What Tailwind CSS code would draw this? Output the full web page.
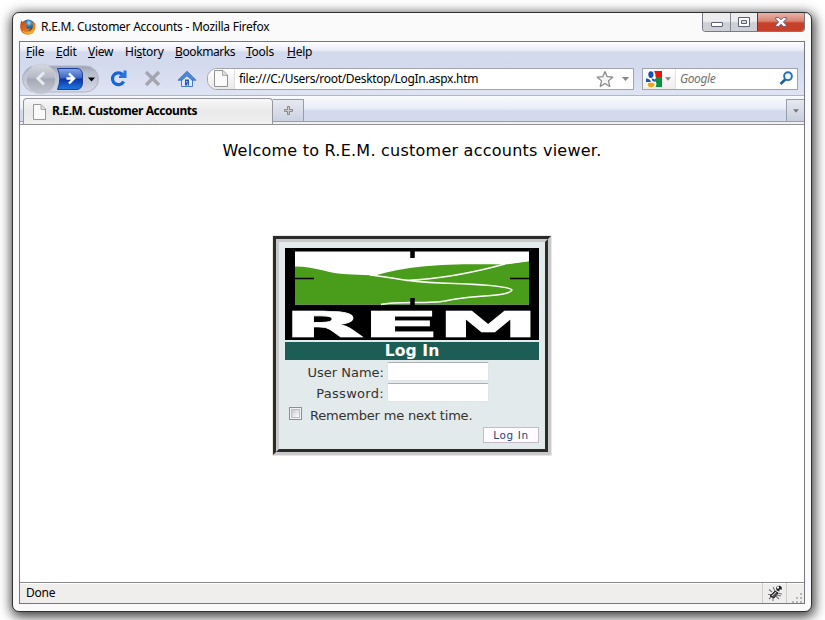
<!DOCTYPE html>
<html lang="en">
<head>
<meta charset="utf-8">
<title>R.E.M. Customer Accounts</title>
<script src="https://cdn.jsdelivr.net/npm/@tailwindcss/browser@4"></script>
</head>
<body class="h-[620px] w-[825px] overflow-hidden bg-white pl-[12px] pt-[12px] font-['Noto_Sans',sans-serif] text-[12px] text-black">
<div class="flex h-[600px] w-[800px] flex-col rounded-[7px] border border-[#303030] bg-[#fafafa] px-[6px] pb-[7px] shadow-[1px_3px_12px_2px_rgba(0,0,0,0.75)]">
  <header class="flex h-[28px] shrink-0 justify-between">
    <div class="flex items-center gap-[5px] pl-[1px]">
      <svg class="size-[16px]" viewBox="0 0 16 16">
        <defs><radialGradient id="globe" cx=".55" cy=".25"><stop offset="0" stop-color="#9cdcf2"/><stop offset=".5" stop-color="#2b78b8"/><stop offset="1" stop-color="#163a78"/></radialGradient><linearGradient id="fox" x2="1" y2="1"><stop offset="0" stop-color="#b4471c"/><stop offset=".55" stop-color="#e8741b"/><stop offset="1" stop-color="#f4b32a"/></linearGradient></defs>
        <circle cx="8.2" cy="7.4" r="6.8" fill="url(#globe)"/>
        <path d="M1.3 1.6 2.8 3 5 2.4 6.2 4.2 8 5 6.8 6.3 6 7.4 7 9.4 9.3 9.7 11 8.7 9.8 10.8 8 11.6C11 12 13 9.5 12.8 6.4L12 3.3C14.5 4.5 15 2.4 15.5 6.3 16 11.8 12.4 15.7 8 15.7 3 15.7.3 12.2.2 8 .2 5 .8 3.3 1.3 1.6Z" fill="url(#fox)"/>
        <path d="M3 12C6 15 11 14.5 13.7 11" fill="none" stroke="#f8c53a" stroke-width="1"/>
      </svg>
      <span class="whitespace-nowrap tracking-[-0.25px]">R.E.M. Customer Accounts - Mozilla Firefox</span>
    </div>
    <div class="flex h-[19px] overflow-hidden rounded-b-[4px] border border-t-0 border-[#777983]">
      <button class="flex w-[28px] items-center justify-center border-r border-[#858791] bg-linear-to-b from-[#ededf0] from-45% to-[#cfd0d5] to-55%"><svg class="mt-[4px] h-[5px] w-[12px]" viewBox="0 0 12 5"><rect x=".5" y=".5" width="11" height="4" rx=".5" fill="#fff" stroke="#596078"/></svg></button>
      <button class="flex w-[26px] items-center justify-center bg-linear-to-b from-[#ededf0] from-45% to-[#cfd0d5] to-55%"><svg class="h-[10px] w-[12px]" viewBox="0 0 12 10"><path fill-rule="evenodd" d="M.5.5h11v9H.5Zm3 3v3h5v-3Z" fill="#fff" stroke="#596078"/></svg></button>
      <button class="flex w-[47px] items-center justify-center border-l border-[#7b2c22] bg-linear-to-b from-[#e9b3a8] from-0% via-[#d98371] via-45% to-[#c9402a] to-55%"><svg class="h-[10px] w-[12px]" viewBox="0 0 12 10"><path d="M.7.6h3.1L6 2.8 8.2.6h3.1V2L8.4 5l2.9 3v1.4H8.2L6 7.2 3.8 9.4H.7V8l2.9-3L.7 2Z" fill="#fff" stroke="#5c5068" stroke-width=".9"/></svg></button>
    </div>
  </header>

  <section class="flex min-h-0 flex-1 flex-col border border-[#74777d] bg-white">
    <nav class="flex h-[20px] shrink-0 items-center bg-linear-to-b from-white from-0% via-[#e9edf7] via-40% to-[#d3daed] to-50% pl-[6px] tracking-[-0.25px]">
      <span class="w-[30px]"><u>F</u>ile</span><span class="w-[32px]"><u>E</u>dit</span><span class="w-[37px]"><u>V</u>iew</span><span class="w-[50px]">Hi<u>s</u>tory</span><span class="w-[71px] tracking-[-0.4px]"><u>B</u>ookmarks</span><span class="w-[41px]"><u>T</u>ools</span><span><u>H</u>elp</span>
    </nav>
    <div class="flex h-[34px] shrink-0 items-center border-b border-[#b1b6c6] bg-linear-to-b from-[#d2d9ed] to-[#dfe4f3] pl-[2px] pr-[5px]">
      <svg class="h-[32px] w-[78px] shrink-0" viewBox="0 0 78 32">
        <defs><linearGradient id="pill" x2="0" y2="1"><stop offset="0" stop-color="#9ca2b2"/><stop offset=".25" stop-color="#b7bccb"/><stop offset="1" stop-color="#d6dbe9"/></linearGradient><linearGradient id="round" x2="0" y2="1"><stop offset="0" stop-color="#d5d9e2"/><stop offset=".45" stop-color="#b4b9c5"/><stop offset=".5" stop-color="#a4a9b5"/><stop offset="1" stop-color="#c3c8d3"/></linearGradient><linearGradient id="fwd" x2="0" y2="1"><stop offset="0" stop-color="#87a7e4"/><stop offset=".45" stop-color="#3a65c4"/><stop offset=".5" stop-color="#0b32a2"/><stop offset="1" stop-color="#2179e4"/></linearGradient></defs>
        <rect x=".5" y="3" width="76" height="26" rx="13" fill="url(#pill)" stroke="#b0b5c3"/>
        <circle cx="19" cy="16" r="15" fill="url(#round)" stroke="#c9cdd7"/>
        <path d="M22 9.500 16 15.500l6 6" fill="none" stroke="#e8eaf0" stroke-width="3"/>
        <path d="M35.500 5.500H55Q60.500 6 60.500 12v8Q60 26 55 26.500H35.500Q40 16 35.500 5.500Z" fill="url(#fwd)" stroke="#173e9d"/>
        <path d="m47 10.500 5 5-5 5M44.500 15.500H51" fill="none" stroke="#fff" stroke-width="2.400"/>
        <path d="M66 14.500h7l-3.500 4Z" fill="#000"/>
      </svg>
      <div class="flex w-[107px] shrink-0 items-center pl-[10px]">
        <svg class="size-[17px] shrink-0" viewBox="0 0 17 17"><path d="M13.600 11.500A5.900 5.900 0 1 1 12.500 4.500" fill="none" stroke="#1766d5" stroke-width="3.200"/><path d="M16.500 .5v7.500H9V6.200L13.500 3V.5Z" fill="#2573dc"/></svg>
        <svg class="ml-[17px] size-[17px] shrink-0" viewBox="0 0 17 17"><path d="m2 2 13 13M15 2 2 15" stroke="#a3a6b0" stroke-width="3.300"/></svg>
        <svg class="ml-[16px] h-[18px] w-[20px] shrink-0" viewBox="0 0 20 18"><path d="M4.500 8.500 10 3l5.500 5.500v8h-11Z" fill="#dfebfc" stroke="#467bc7"/><path d="M1 10.200 10 1.200l9 9H15L10 5.800 5 10.200Z" fill="#5086d9" stroke="#3568b9" stroke-width=".8"/><path d="M8 9.500h4v6H8Z" fill="#2556a0"/><path d="M9 11h1.500v1.500H9ZM10 13.500h1v2h-1Z" fill="#a9caf2"/></svg>
      </div>
      <div class="flex h-[22px] w-[427px] shrink-0 items-center overflow-hidden rounded-l-[10px] border border-[#a0a3ac] bg-white">
        <div class="flex h-full w-[27px] items-center justify-center border-r border-[#e0e0e0] bg-linear-to-b from-white to-[#e9e9e9]">
          <svg class="h-[17px] w-[14px]" viewBox="0 0 14 17"><path d="M.5.5h8.500l4.500 4.500v11.500H.5Z" fill="#fafafa" stroke="#929292"/><path d="M8.500 1v4.500H13" fill="#ddd" stroke="#aaa"/></svg>
        </div>
        <span class="flex-1 whitespace-nowrap pl-[4px] tracking-[-0.3px]">file:///C:/Users/root/Desktop/LogIn.aspx.htm</span>
        <svg class="size-[18px]" viewBox="0 0 18 18"><path d="m9 1.500 2.200 5.200 5.500.5-4.200 3.700 1.300 5.600L9 13.600l-4.800 2.900 1.300-5.600L1.300 7.200l5.500-.5Z" fill="#f4f4f4" stroke="#888" stroke-width="1.200" stroke-linejoin="round"/></svg>
        <svg class="ml-[8px] mr-[4px] h-[4px] w-[7px]" viewBox="0 0 7 4"><path d="M0 0h7L3.500 4Z" fill="#858585"/></svg>
      </div>
      <div class="ml-[8px] flex h-[22px] w-[156px] shrink-0 items-center border border-[#a0a3ac] bg-white">
        <div class="flex h-full w-[33px] items-center gap-[3px] border-r border-[#e2e2e2] bg-linear-to-b from-white to-[#eee] pl-[3px]">
          <svg class="size-[16px]" viewBox="0 0 16 16"><path d="M0 0h16v16H0Z" fill="#fff"/><path d="M8 0h8v6H9.500Q10 3 8 0Z" fill="#e7160b"/><path d="M10 6H16v10H9.500Q12 12 8 9Q10 8 10 6Z" fill="#0a9140"/><path d="M0 7.500q4 0 5 3.500H0Z" fill="#1552ba"/><ellipse cx="4.900" cy="3.600" rx="2.600" ry="3.400" fill="#1552ba"/><path d="m5.500 7.500 2.500.5 1.500 3-3-1Z" fill="#1552ba"/><ellipse cx="5" cy="13.700" rx="3.500" ry="2.300" fill="#f0a616"/></svg>
          <svg class="h-[4px] w-[6px]" viewBox="0 0 7 4"><path d="M0 0h7L3.500 4Z" fill="#858585"/></svg>
        </div>
        <span class="flex-1 pl-[4px] italic tracking-[-0.4px] text-[#707070]">Google</span>
        <svg class="mr-[3px] size-[15px]" viewBox="0 0 15 15"><path d="M6.500 8.200 1.500 13" stroke="#1f5e9b" stroke-width="2.600"/><circle cx="9" cy="5.200" r="3.900" fill="#e9f3fb" stroke="#286daf" stroke-width="1.900"/></svg>
      </div>
    </div>

    <div class="flex h-[29px] shrink-0 items-start border-b border-[#929292] bg-[#f0f0f0]">
      <div class="flex h-[26px] w-full items-start border-b border-[#9a9ca3] bg-linear-to-b from-[#fafbfe] from-0% via-[#e9edf7] via-50% to-[#d3daed] to-60%">
      <div class="mb-[-1px] ml-[3px] mt-[2px] flex h-[26px] w-[250px] items-center rounded-t-[4px] border border-b-0 border-[#94969c] bg-linear-to-b from-[#f8f8f8] from-0% via-[#e9e9e9] via-50% to-[#f0f0f0] pl-[9px] font-bold">
        <svg class="h-[16px] w-[13px]" viewBox="0 0 13 16"><path d="M.5.5H8l4.500 4.500v10.500H.5Z" fill="#fafafa" stroke="#999"/><path d="M8 1v4.500h4" fill="#ddd" stroke="#aaa"/></svg>
        <span class="ml-[6px] mt-[-1px] whitespace-nowrap tracking-[-0.44px]">R.E.M. Customer Accounts</span>
      </div>
      <div class="mt-[3px] flex h-[23px] w-[31px] items-center justify-center border border-l-0 border-[#989daa] bg-linear-to-b from-[#e7e9f0] to-[#ccd2e2]"><svg class="size-[9px]" viewBox="0 0 9 9"><path d="M3.500.5h2v3h3v2h-3v3h-2v-3h-3v-2h3Z" fill="#ccc" stroke="#777" stroke-width=".8"/></svg></div>
      <div class="ml-auto mt-[3px] flex h-[23px] w-[18px] items-center justify-center border border-r-0 border-[#989daa] bg-linear-to-b from-[#e7e9f0] to-[#c8cede]"><svg class="h-[4px] w-[6px]" viewBox="0 0 7 4"><path d="M0 0h7L3.500 4Z" fill="#777"/></svg></div>
      </div>
    </div>

    <main class="flex min-h-0 flex-1 flex-col items-center bg-white font-['DejaVu_Sans',sans-serif]">
      <h1 class="mt-[15px] h-[22px] whitespace-nowrap text-[16px] leading-[22px] tracking-[0.24px]">Welcome to R.E.M. customer accounts viewer.</h1>
      <div class="mt-[74px] border-[3px] border-b-[#c9c9c9] border-l-[#2b2b2b] border-r-[#c9c9c9] border-t-[#2b2b2b] shadow-[0_0_0_1px_#ebe8df]">
        <form class="flex h-[213px] w-[272px] flex-col border-[3px] border-b-[#2b2b2b] border-l-[#c9c9c9] border-r-[#2b2b2b] border-t-[#c9c9c9] bg-[#e2eaeb] p-[6px] text-[13px] text-[#333]">
          <svg class="h-[92px] w-[254px] shrink-0 overflow-visible" viewBox="0 0 254 92">
            <path d="M0 0h254v92H0Z" fill="#000"/>
            <path d="M10 3.500h234v53H10Z" fill="#fff"/>
            <path d="M10 18.500C32 18.500 44 26 62 26.200L90 27.500C126 17 164 15.500 220 16.500L244 13.500V56.500H10Z" fill="#4a9c1b"/>
            <path d="M85 27C107 29 119 34 155 35 190 36 224 38 227 42 224 49 184 47 160 53 144 56 112 53 96 56.500M121 32.500C158 31 198 22 220 16" fill="none" stroke="#fff" stroke-width="1.500"/>
            <path d="M221 17 244 13.500V20Z" fill="#4a9c1b"/>
            <path d="M127.500 3v7M127.500 50v7" stroke="#000" stroke-width="4.500"/><path d="M10 30.500h19M225 30.500h19" stroke="#000" stroke-width="1.500"/>
            <g fill="#fff" stroke="#fff" stroke-width=".7" font-family="DejaVu Sans" font-weight="bold" font-size="36">
              <text transform="translate(-1.300 88.500) scale(2.900 1)">R</text><text transform="translate(76.500 88.500) scale(3.220 1)">E</text><text transform="translate(152.400 88.500) scale(2.830 1)">M</text>
            </g>
          </svg>
          <h2 class="mt-[2px] h-[18px] shrink-0 bg-[#1c5e55] text-center text-[15.600px] font-bold leading-[18px] tracking-[0.1px] text-white">Log In</h2>
          <label class="mt-[2px] flex h-[19px] shrink-0 items-center"><span class="mr-[3px] mt-[2px] w-[99px] whitespace-nowrap text-right">User Name:</span><input class="h-[19px] w-[102px] rounded-[2px] border border-[#e0e3e8] border-t-[#abadb3] bg-white"></label>
          <label class="mt-[2px] flex h-[19px] shrink-0 items-center"><span class="mr-[3px] mt-[2px] w-[99px] whitespace-nowrap text-right tracking-[0.3px]">Password:</span><input type="password" class="h-[19px] w-[102px] rounded-[2px] border border-[#e0e3e8] border-t-[#abadb3] bg-white"></label>
          <label class="mt-[5px] flex h-[17px] shrink-0 items-center pl-[4px]"><span class="mt-[-4px] size-[13px] border border-[#8e8f8f] bg-[#f4f4f4] p-[1px]"><span class="block size-[9px] border border-[#b9bdc3] bg-linear-to-br from-[#c4c9d0] to-white"></span></span><span class="ml-[8px] whitespace-nowrap tracking-[-0.2px]">Remember me next time.</span></label>
          <button type="button" class="ml-auto mt-[3px] flex h-[16px] w-[56px] shrink-0 items-center justify-center border border-[#c5bbc5] bg-[#fffbff] pt-[1px] text-[10.400px] tracking-[0.7px] text-[#284775]">Log In</button>
        </form>
      </div>
    </main>

    <footer class="flex h-[21px] shrink-0 border-t border-[#8a8a8a] bg-[#f0eded] shadow-[inset_0_1px_0_#fff]">
      <span class="pl-[6px] leading-[19px] tracking-[-0.2px]">Done</span>
      <div class="ml-auto flex w-[25px] items-center justify-center border-x border-[#cfcccc]"><svg class="size-[16px]" viewBox="0 0 16 16"><path d="M2 4.500 5 7M1 9.500h4M2 14l3-3M6 2l2 4M9 11l3 3M10 8l5 1M6 12v4M10 10l4 1" stroke="#777" stroke-width="1.100"/><path d="m3 11 5-5 3 2-4 5Z" fill="#555" stroke="#222"/><path d="m5 11 4-4" stroke="#ccc"/><circle cx="12" cy="3.500" r="2.800" fill="#222"/><path d="M10 1.500h2v2h-2ZM12.500 4.500h2v1.500h-2Z" fill="#fff"/></svg></div>
      <svg class="mt-[2px] h-[18px] w-[17px]" viewBox="0 0 17 18"><g fill="#b9b5b5"><path d="M13 8h2v2h-2ZM9 12h2v2H9ZM13 12h2v2h-2ZM5 16h2v2H5ZM9 16h2v2H9ZM13 16h2v2h-2Z"/></g></svg>
    </footer>
  </section>
</div>
</body>
</html>
